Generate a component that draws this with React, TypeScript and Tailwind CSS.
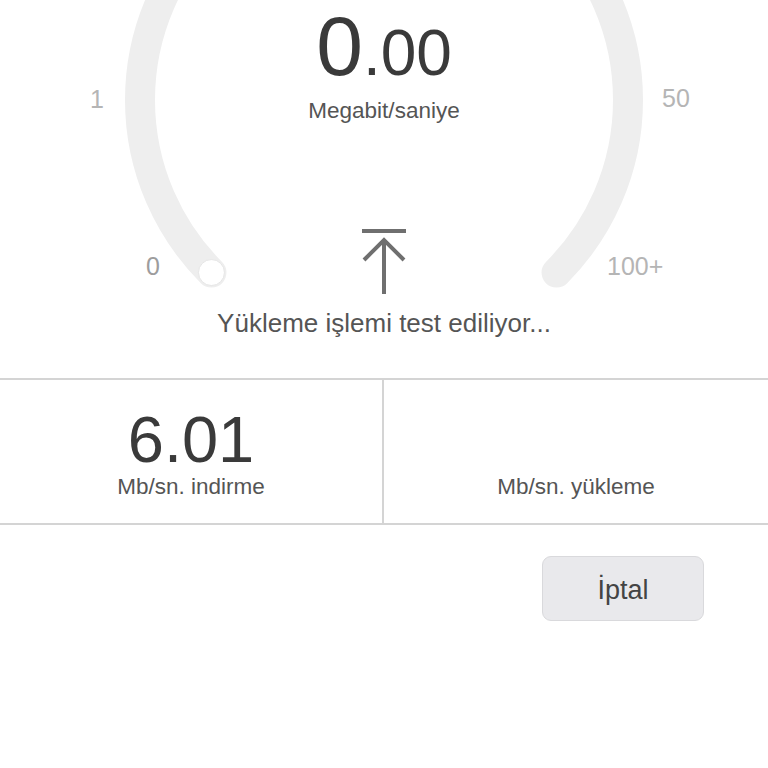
import React from "react";

const font = { fontFamily: '"Liberation Sans", Arial, sans-serif' };

function GaugeArc() {
  // center (384,100), r 244, 270deg sweep from bottom-left to bottom-right
  const cx = 384;
  const cy = 100;
  const r = 244;
  const a0 = (135 * Math.PI) / 180;
  const a1 = (45 * Math.PI) / 180;
  const x0 = cx + r * Math.cos(a0);
  const y0 = cy + r * Math.sin(a0);
  const x1 = cx + r * Math.cos(a1);
  const y1 = cy + r * Math.sin(a1);
  return (
    <svg className="absolute inset-0" width="768" height="378" viewBox="0 0 768 378">
      <path
        d={`M ${x0} ${y0} A ${r} ${r} 0 1 1 ${x1} ${y1}`}
        fill="none"
        stroke="#eeeeee"
        strokeWidth="30"
        strokeLinecap="round"
      />
      <circle cx={x0} cy={y0} r="13" fill="#ffffff" stroke="#e6e6e6" strokeWidth="1" />
    </svg>
  );
}

function UploadIcon() {
  return (
    <svg width="46" height="66" viewBox="0 0 46 66" fill="none" stroke="#6f6f6f" strokeWidth="4">
      <line x1="1" y1="2" x2="45" y2="2" />
      <line x1="23" y1="11" x2="23" y2="65" />
      <polyline points="3,31 23,11 43,31" strokeLinejoin="miter" />
    </svg>
  );
}

export default function App() {
  return (
    <div className="w-[768px] h-[768px] bg-white overflow-hidden" style={font}>
      <div className="relative h-[378px]">
        <GaugeArc />
        <span className="absolute left-[90px] top-[84px] text-[25px] leading-[30px] text-[#b5b5b5]">1</span>
        <span className="absolute left-[662px] top-[83px] text-[25px] leading-[30px] text-[#b5b5b5]">50</span>
        <span className="absolute left-[146px] top-[251px] text-[25px] leading-[30px] text-[#9d9d9d]">0</span>
        <span className="absolute left-[607px] top-[251px] text-[25px] leading-[30px] text-[#b5b5b5]">100+</span>

        <div className="relative flex flex-col items-center pt-[4px]">
          <div className="flex items-baseline text-[#3a3a3a] leading-none">
            <span className="text-[84px]">0</span>
            <span className="text-[64px]">.00</span>
          </div>
          <div className="mt-[10px] text-[22.5px] text-[#555555] leading-[26px]">Megabit/saniye</div>
          <div className="mt-[105px]">
            <UploadIcon />
          </div>
          <div className="mt-[13px] text-[26px] text-[#555555] leading-[30px]">
            Yükleme işlemi test ediliyor...
          </div>
        </div>
      </div>

      <div className="grid grid-cols-2 h-[147px] border-y-2 border-[#d4d4d4]">
        <div className="flex flex-col items-center justify-end pb-[23px] border-r-2 border-[#d4d4d4]">
          <div className="text-[65px] leading-none text-[#3a3a3a]">6.01</div>
          <div className="mt-[2px] text-[22.5px] leading-[26px] text-[#555555]">Mb/sn. indirme</div>
        </div>
        <div className="flex flex-col items-center justify-end pb-[23px]">
          <div className="text-[22.5px] leading-[26px] text-[#555555]">Mb/sn. yükleme</div>
        </div>
      </div>

      <div className="flex justify-end pr-[64px] pt-[31px]">
        <button className="w-[162px] h-[65px] pt-[4px] rounded-[9px] bg-[#e9e9ec] border border-[#d9d9dc] text-[27px] text-[#444444]">
          İptal
        </button>
      </div>
    </div>
  );
}
